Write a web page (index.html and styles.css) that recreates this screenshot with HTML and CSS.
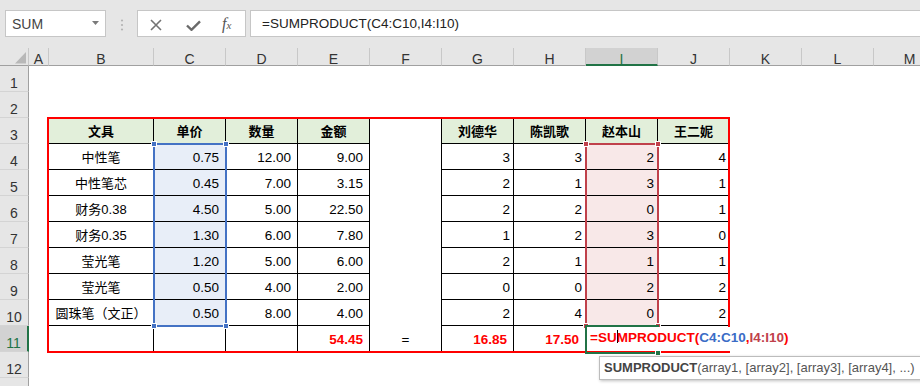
FILE: index.html
```html
<!DOCTYPE html>
<html lang="zh-CN">
<head>
<meta charset="utf-8">
<title>SUMPRODUCT</title>
<link rel="stylesheet" href="styles.css">
</head>
<body>
<div class="toolbar">
  <div class="namebox"><span>SUM</span><svg class="dd" width="7" height="4" viewBox="0 0 7 4"><path d="M0 0H7L3.5 4Z" fill="#7a7a7a"/></svg></div>
  <svg class="grip" width="4" height="12" viewBox="0 0 4 12"><circle cx="2" cy="1.5" r="1.1" fill="#b3b3b3"/><circle cx="2" cy="6" r="1.1" fill="#b3b3b3"/><circle cx="2" cy="10.5" r="1.1" fill="#b3b3b3"/></svg>
  <div class="fxbox">
    <svg class="ic-x" width="12" height="12" viewBox="0 0 12 12"><path d="M1 1L11 11M11 1L1 11" stroke="#737373" stroke-width="1.6" fill="none"/></svg>
    <svg class="ic-ok" width="15" height="11" viewBox="0 0 15 11"><path d="M1 5.5L5.5 9.8L14 1.3" stroke="#6a6a6a" stroke-width="2.4" fill="none"/></svg>
    <span class="fx">f<span class="fxs">x</span></span>
  </div>
  <div class="formula">=SUMPRODUCT(C4:C10,I4:I10)</div>
</div>

<div class="sheet">
  <div class="corner"><svg width="28" height="17" viewBox="0 0 28 17"><path d="M15 15.5H26V4Z" fill="#b8b8b8"/></svg></div>
  <div class="ch">A</div>
  <div class="ch">B</div>
  <div class="ch">C</div>
  <div class="ch">D</div>
  <div class="ch">E</div>
  <div class="ch">F</div>
  <div class="ch">G</div>
  <div class="ch">H</div>
  <div class="ch sel">I</div>
  <div class="ch">J</div>
  <div class="ch">K</div>
  <div class="ch">L</div>
  <div class="ch">M</div>

  <div class="tbl">
    <div class="c h">文具</div><div class="c h">单价</div><div class="c h">数量</div><div class="c h">金额</div><div class="f"></div><div class="c h">刘德华</div><div class="c h">陈凯歌</div><div class="c h">赵本山</div><div class="c h">王二妮</div>

    <div class="c t">中性笔</div><div class="c n bl">0.75</div><div class="c n">12.00</div><div class="c n">9.00</div><div class="f"></div><div class="c i">3</div><div class="c i">3</div><div class="c i pk">2</div><div class="c i">4</div>

    <div class="c t">中性笔芯</div><div class="c n bl">0.45</div><div class="c n">7.00</div><div class="c n">3.15</div><div class="f"></div><div class="c i">2</div><div class="c i">1</div><div class="c i pk">3</div><div class="c i">1</div>

    <div class="c t">财务0.38</div><div class="c n bl">4.50</div><div class="c n">5.00</div><div class="c n">22.50</div><div class="f"></div><div class="c i">2</div><div class="c i">2</div><div class="c i pk">0</div><div class="c i">1</div>

    <div class="c t">财务0.35</div><div class="c n bl">1.30</div><div class="c n">6.00</div><div class="c n">7.80</div><div class="f"></div><div class="c i">1</div><div class="c i">2</div><div class="c i pk">3</div><div class="c i">0</div>

    <div class="c t">莹光笔</div><div class="c n bl">1.20</div><div class="c n">5.00</div><div class="c n">6.00</div><div class="f"></div><div class="c i">2</div><div class="c i">1</div><div class="c i pk">1</div><div class="c i">1</div>

    <div class="c t">莹光笔</div><div class="c n bl">0.50</div><div class="c n">4.00</div><div class="c n">2.00</div><div class="f"></div><div class="c i">0</div><div class="c i">0</div><div class="c i pk">2</div><div class="c i">2</div>

    <div class="c t">圆珠笔（文正）</div><div class="c n bl">0.50</div><div class="c n">8.00</div><div class="c n">4.00</div><div class="f"></div><div class="c i">2</div><div class="c i">4</div><div class="c i pk">0</div><div class="c i">2</div>

    <div class="c"></div><div class="c"></div><div class="c"></div><div class="c n red">54.45</div><div class="f eq">=</div><div class="c n red">16.85</div><div class="c n red">17.50</div><div class="c"></div><div class="c"></div>

    <div class="outline"></div>
    <div class="rng blue"><i class="hdl tl"></i><i class="hdl tr"></i><i class="hdl bl-h"></i><i class="hdl br"></i></div>
    <div class="rng pink"><i class="hdl tl"></i><i class="hdl tr"></i><i class="hdl bl-h"></i><i class="hdl br"></i></div>
    <div class="act"><i class="hdl br"></i></div>
    <div class="editor"><span class="e-r">=SU</span><span class="caret"></span><span class="e-r">MPRODUCT(</span><span class="e-b">C4:C10</span><span class="e-r">,</span><span class="e-p">I4:I10</span><span class="e-r">)</span></div>
    <div class="tip"><b>SUMPRODUCT</b>(array1, [array2], [array3], [array4], ...)</div>
  </div>

  <div class="rh">1</div>
  <div class="rh">2</div>
  <div class="rh">3</div>
  <div class="rh">4</div>
  <div class="rh">5</div>
  <div class="rh">6</div>
  <div class="rh">7</div>
  <div class="rh">8</div>
  <div class="rh">9</div>
  <div class="rh">10</div>
  <div class="rh sel">11</div>
  <div class="rh">12</div>
  <div class="rh"></div>
</div>
</body>
</html>
```

FILE: styles.css
```css
html, body {
  margin: 0;
  padding: 0;
}
body {
  width: 920px;
  height: 386px;
  overflow: hidden;
  background: #fff;
  font-family: "Liberation Sans", "Noto Sans CJK SC", sans-serif;
}

/* ---------- formula bar ---------- */
.toolbar {
  display: flex;
  align-items: flex-start;
  height: 48px;
  box-sizing: border-box;
  padding: 10px 0 0 5px;
  background: #e6e6e6;
}
.namebox {
  display: flex;
  align-items: center;
  width: 101px;
  height: 27px;
  box-sizing: border-box;
  border: 1px solid #c6c6c6;
  background: #fff;
  padding: 0 6px;
  font-size: 14px;
  color: #444;
}
.namebox span { flex: 1; }
.dd { margin-top: -2px; margin-right: 0; }
.grip { margin: 9px 0 0 14px; }
.fxbox {
  display: flex;
  align-items: center;
  margin-left: 13px;
  width: 109px;
  height: 27px;
  box-sizing: border-box;
  border: 1px solid #c6c6c6;
  background: #fff;
  padding-left: 12px;
}
.ic-x { margin-top: 2px; }
.ic-ok { margin-left: 24px; margin-top: 4px; }
.fx {
  margin-left: 21px;
  margin-top: 1px;
  font-family: "Liberation Serif", serif;
  font-style: italic;
  font-size: 16px;
  color: #555;
  line-height: 16px;
}
.fxs { font-size: 11px; }
.formula {
  flex: 1;
  margin-left: 4px;
  margin-right: -2px;
  height: 27px;
  box-sizing: border-box;
  border: 1px solid #c6c6c6;
  background: #fff;
  padding-left: 11px;
  font-size: 13.5px;
  line-height: 25px;
  color: #222;
}

/* ---------- sheet ---------- */
.sheet {
  display: grid;
  grid-template-columns: 29px 20px 105px repeat(11, 72px);
  grid-template-rows: 18px repeat(13, 26px);
}
.corner {
  background: #e6e6e6;
  border-right: 1px solid #c8c8c8;
  border-bottom: 1px solid #a0a0a0;
}
.corner svg { display: block; }
.ch {
  box-sizing: border-box;
  background: #e6e6e6;
  border-right: 1px solid #c8c8c8;
  border-bottom: 1px solid #a0a0a0;
  text-align: center;
  font-size: 14px;
  line-height: 18px;
  padding-top: 2px;
  color: #333;
  overflow: hidden;
}
.ch.sel {
  background: #d2d2d2;
  border-bottom: 2px solid #217346;
  color: #217346;
}
.rh {
  grid-column: 1;
  box-sizing: border-box;
  background: #e6e6e6;
  border-right: 1px solid #a0a0a0;
  border-bottom: 1px solid #d4d4d4;
  text-align: center;
  font-size: 14px;
  line-height: 26px;
  padding-top: 4px;
  color: #333;
  overflow: hidden;
}
.rh.sel {
  background: #d2d2d2;
  border-right: 2px solid #217346;
  color: #217346;
}

/* ---------- data table ---------- */
.tbl {
  grid-column: 3 / 12;
  grid-row: 4 / 13;
  position: relative;
  display: grid;
  grid-template-columns: 105px repeat(8, 72px);
  grid-template-rows: repeat(9, 26px);
}
.c, .f {
  box-sizing: border-box;
  line-height: 26px;
  padding-top: 1px;
  white-space: nowrap;
  font-size: 13.5px;
  color: #000;
}
.c {
  border-right: 1px solid #000;
  border-bottom: 1px solid #000;
}
.f { border-right: 1px solid #000; }
.h {
  background: #e2efda;
  font-weight: bold;
  text-align: center;
  font-size: 13px;
}
.t { text-align: center; font-size: 13px; }
.n { text-align: right; padding-right: 6px; }
.i { text-align: right; padding-right: 3px; }
.bl { background: #e8eef8; }
.pk { background: #f8e8e8; }
.red { color: #ff0000; font-weight: bold; }
.eq { text-align: center; }

/* ---------- overlays ---------- */
.outline {
  position: absolute;
  left: -2px;
  top: -1px;
  right: 0;
  bottom: -1px;
  border: 2px solid #ff0000;
  z-index: 1;
  pointer-events: none;
}
.rng {
  position: absolute;
  top: 25px;
  width: 74px;
  height: 184px;
  box-sizing: border-box;
  border: 2px solid;
  z-index: 2;
}
.blue { left: 104px; border-color: #4472c4; }
.pink { left: 536px; border-color: #c0414b; }
.act {
  position: absolute;
  left: 536px;
  top: 207px;
  width: 74px;
  height: 29px;
  box-sizing: border-box;
  border: 2px solid #217346;
  z-index: 3;
}
.hdl {
  position: absolute;
  width: 6px;
  height: 6px;
  box-sizing: border-box;
  border: 1px solid #fff;
  z-index: 6;
}
.blue .hdl { background: #4472c4; }
.pink .hdl { background: #c0414b; }
.act .hdl { background: #217346; }
.hdl.tl { left: -4px; top: -4px; }
.hdl.tr { right: -4px; top: -4px; }
.hdl.bl-h { left: -4px; bottom: -4px; }
.hdl.br { right: -4px; bottom: -4px; }

.editor {
  position: absolute;
  left: 538px;
  top: 209px;
  width: 215px;
  height: 24px;
  box-sizing: border-box;
  padding-left: 3px;
  background: #fff;
  font-size: 13.5px;
  font-weight: bold;
  line-height: 22px;
  white-space: nowrap;
  z-index: 4;
}
.e-r { color: #ff0000; }
.e-b { color: #3a6cc6; }
.e-p { color: #c0414b; }
.caret {
  display: inline-block;
  width: 1px;
  height: 13px;
  margin-right: -1px;
  background: #000;
  vertical-align: -1px;
}
.tip {
  position: absolute;
  left: 550px;
  top: 238px;
  z-index: 7;
  background: #fff;
  border: 1px solid #bcbcbc;
  box-shadow: 1px 1px 3px rgba(0, 0, 0, 0.25);
  padding: 1px 7px 1px 4px;
  font-size: 13px;
  line-height: 20px;
  color: #555;
  white-space: nowrap;
}
.tip b { color: #444; }
```
